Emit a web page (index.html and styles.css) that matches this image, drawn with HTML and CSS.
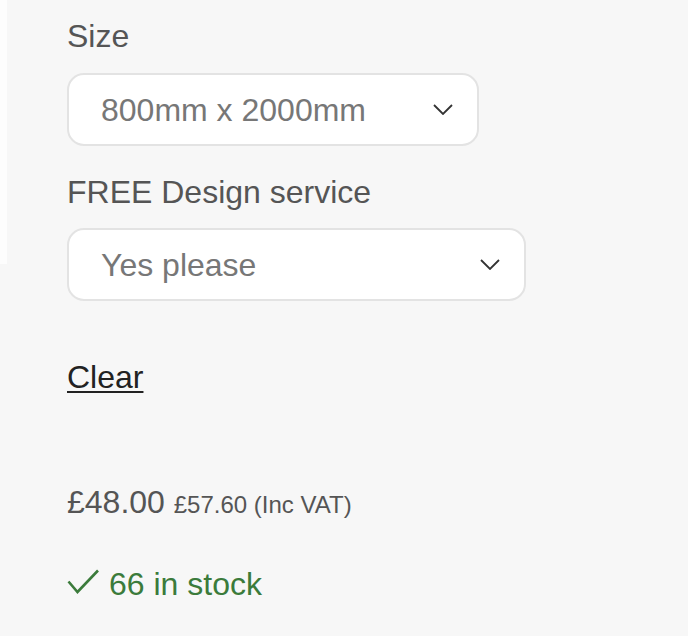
FILE: index.html
```html
<!DOCTYPE html>
<html lang="en">
<head>
<meta charset="utf-8">
<title>Product options</title>
<link rel="stylesheet" href="styles.css">
</head>
<body>
<div class="page">
  <div class="edge"></div>
  <main class="options">
    <div class="field">
      <label class="label">Size</label>
      <div class="select select-size">
        <span class="value">800mm x 2000mm</span>
        <svg class="chev" width="20" height="11" viewBox="0 0 20 11"><path d="M1 1 L10 10 L19 1" fill="none" stroke="#333" stroke-width="1.8"/></svg>
      </div>
    </div>
    <div class="field field-design">
      <label class="label">FREE Design service</label>
      <div class="select select-design">
        <span class="value">Yes please</span>
        <svg class="chev" width="20" height="11" viewBox="0 0 20 11"><path d="M1 1 L10 10 L19 1" fill="none" stroke="#333" stroke-width="1.8"/></svg>
      </div>
    </div>
    <a class="clear" href="#">Clear</a>
    <div class="price"><span class="price-ex">£48.00</span> <span class="price-inc">£57.60 (Inc VAT)</span></div>
    <div class="stock">
      <svg class="check" width="32" height="25" viewBox="0 0 32 25"><path d="M1.5 12.5 L10.5 23 L31 1.5" fill="none" stroke="#3b7b3b" stroke-width="2.6"/></svg>
      <span>66 in stock</span>
    </div>
  </main>
</div>
</body>
</html>
```
FILE: styles.css
```css
html, body {
  margin: 0;
  padding: 0;
  background: #f7f7f7;
}
body {
  font-family: "Liberation Sans", Arial, sans-serif;
  font-size: 32px;
  line-height: 36px;
  color: #555;
}
.page {
  display: flex;
  align-items: flex-start;
}
.edge {
  flex: none;
  width: 7px;
  height: 264px;
  background: #fdfdfd;
}
.options {
  display: flex;
  flex-direction: column;
  align-items: flex-start;
  padding: 18px 0 0 60px;
}
.field {
  display: flex;
  flex-direction: column;
  align-items: flex-start;
}
.field-design {
  margin-top: 28px;
}
.label {
  display: block;
  color: #555;
}
.select {
  box-sizing: border-box;
  height: 73px;
  margin-top: 19px;
  display: flex;
  align-items: center;
  justify-content: space-between;
  padding: 0 24px 0 32px;
  background: #fff;
  border: 2px solid #e3e3e3;
  border-radius: 17px;
  color: #777;
}
.select-size { width: 412px; }
.select-design { width: 459px; margin-top: 18px; }
.chev { flex: none; display: block; }
.clear {
  margin-top: 58px;
  color: #222;
  text-decoration: underline;
  text-decoration-thickness: 2px;
  text-underline-offset: 3px;
}
.price {
  margin-top: 89px;
  color: #555;
}
.price-inc {
  font-size: 24px;
}
.stock {
  margin-top: 43px;
  display: flex;
  align-items: center;
  gap: 10px;
  color: #3b7b3b;
}
.check { display: block; margin-top: -6px; }
```
